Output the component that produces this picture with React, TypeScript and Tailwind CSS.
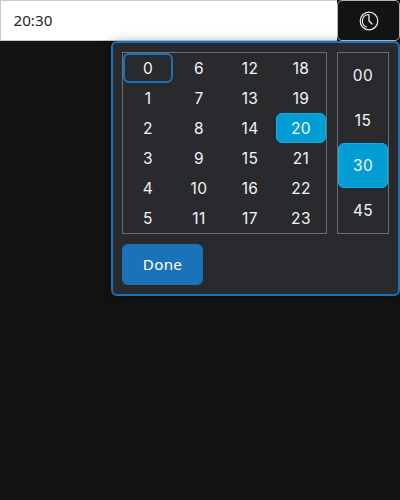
const hours = Array.from({ length: 24 }, (_, hour) => hour);
const minutes = ['00', '15', '30', '45'];

function ClockIcon() {
  return (
    <svg width="20" height="20" viewBox="0 0 20 20" fill="none" stroke="#f1f1f1" strokeLinecap="round" strokeLinejoin="round">
      <circle cx="10" cy="10" r="8.8" strokeWidth="1.2" />
      <path d="M10 4V10l3 3" strokeWidth="1.3" />
      <path d="M9.5 3.5A6.5 6.5 0 0 0 7.4 16" strokeWidth="1.1" />
    </svg>
  );
}

function hourStyle(hour: number) {
  if (hour === 20) return 'border border-[#18ade3] bg-[#039dd6]';
  if (hour === 0) return 'border-2 border-[#1b72b9]';
  return '';
}

export default function App() {
  return (
    <div className="h-[500px] w-[400px] overflow-hidden bg-[#131313] font-['Noto_Sans',sans-serif] text-base">
      <div className="flex h-[41px]">
        <div className="flex w-[338px] items-center border border-r-0 border-[#cbc9cf] bg-white pl-[12.5px] text-[15.2px] text-[#232629]">
          <span>20:30</span>
        </div>
        <div className="-ml-px w-[63px] bg-black">
          <button className="relative z-10 flex h-[41px] w-[63px] items-center justify-center rounded-[5px] border border-[#b3b3b3] bg-[#131313]">
            <ClockIcon />
          </button>
        </div>
      </div>
      <div className="relative ml-[111px] h-[255px] w-[289px] rounded-md border-2 border-[#1b72b9] bg-[#292a2e] px-[9px] pt-[9px] shadow-[0_2px_12px_rgba(0,0,0,0.4)]">
        <div className="flex gap-2.5 font-['Inter',sans-serif] text-[15.5px] tracking-[0.4px] text-[#f4f4f4]">
          <div className="grid h-[182px] w-[205px] grid-flow-col grid-cols-4 grid-rows-6 gap-x-px border border-[#6b6d70]">
            {hours.map((hour) => (
              <button key={hour} className={`flex items-center justify-center rounded-md pt-0.5 ${hourStyle(hour)}`}>
                {hour}
              </button>
            ))}
          </div>
          <div className="grid h-[182px] w-[52px] grid-rows-4 border border-[#6b6d70]">
            {minutes.map((minute) => (
              <button
                key={minute}
                className={`flex items-center justify-center rounded-md pt-px ${minute === '30' ? 'border border-[#18ade3] bg-[#039dd6]' : ''}`}
              >
                {minute}
              </button>
            ))}
          </div>
        </div>
        <button className="mt-2.5 flex h-[41px] w-[81px] items-center justify-center rounded-md bg-[#1b72b9] text-[15.2px] tracking-[0.3px] text-white">
          Done
        </button>
      </div>
    </div>
  );
}
